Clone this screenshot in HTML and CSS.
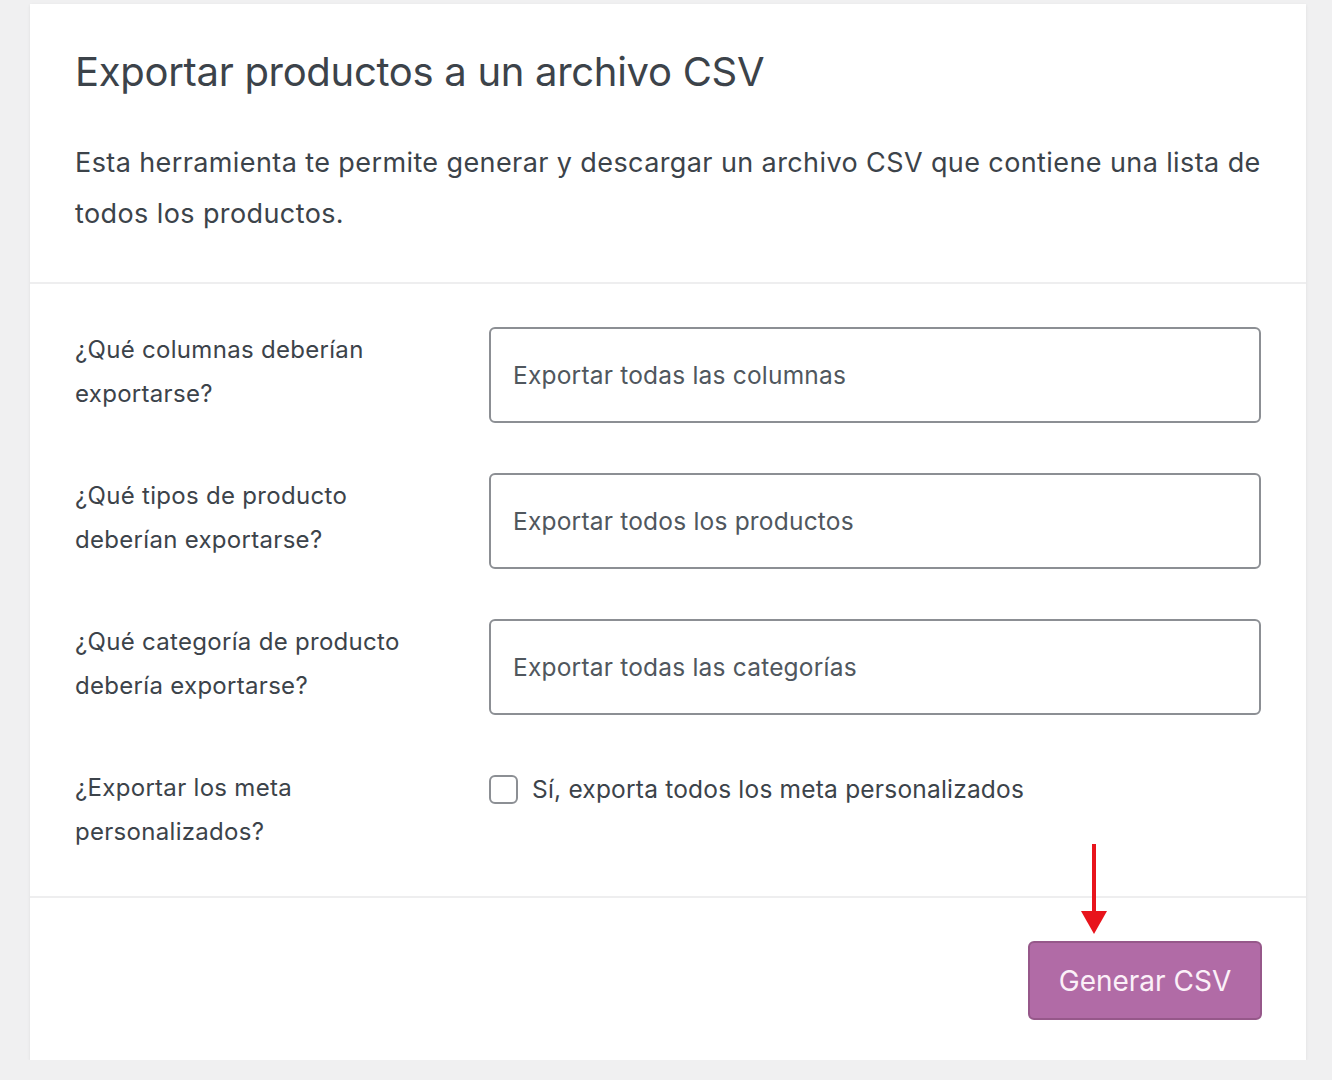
FILE: index.html
```html
<!DOCTYPE html>
<html lang="es">
<head>
    <meta charset="UTF-8">
    <meta name="viewport" content="width=device-width, initial-scale=1.0">
    <title>Exportar productos</title>
    <link rel="stylesheet" href="styles.css">
</head>
<body>

<div class="card">
    <header class="card-head">
        <h2>Exportar productos a un archivo CSV</h2>
        <p>Esta herramienta te permite generar y descargar un archivo CSV que contiene una lista de todos los productos.</p>
    </header>

    <section class="fields">
        <div class="row">
            <label for="cols">¿Qué columnas deberían exportarse?</label>
            <div class="field"><div class="select" id="cols">Exportar todas las columnas</div></div>
        </div>
        <div class="row">
            <label for="types">¿Qué tipos de producto deberían exportarse?</label>
            <div class="field"><div class="select" id="types">Exportar todos los productos</div></div>
        </div>
        <div class="row">
            <label for="cats">¿Qué categoría de producto debería exportarse?</label>
            <div class="field"><div class="select" id="cats">Exportar todas las categorías</div></div>
        </div>
        <div class="row">
            <label for="meta">¿Exportar los meta personalizados?</label>
            <div class="field check">
                <input type="checkbox" id="meta">
                <span>Sí, exporta todos los meta personalizados</span>
            </div>
        </div>
    </section>

    <footer class="card-foot">
        <!-- red pointer above the button -->
        <svg class="arrow" width="28" height="91" viewBox="0 0 28 91">
            <line x1="14" y1="0" x2="14" y2="70" stroke="#e8141c" stroke-width="4"/>
            <polygon points="1,67 27,67 14,90" fill="#e8141c"/>
        </svg>
        <button type="button">Generar CSV</button>
    </footer>
</div>

</body>
</html>
```

FILE: styles.css
```css
body {
    margin: 0;
    background: #f0f0f1;
    font-family: Inter, "Open Sans", Arial, sans-serif;
    color: #3c434a;
}

.card {
    margin: 4px 26px 0 30px;
    background: #fff;
    box-shadow: 0 1px 3px rgba(0, 0, 0, 0.08);
    height: 1056px;
    box-sizing: border-box;
}

.card-head {
    padding: 44px 45px 43px;
    border-bottom: 2px solid #eeeeef;
}

.card-head h2 {
    margin: 0 0 41px;
    font-size: 40px;
    font-weight: 400;
    line-height: 48px;
    color: #3c434a;
    letter-spacing: -0.3px;
}

.card-head p {
    margin: 0;
    font-size: 27px;
    line-height: 51px;
    letter-spacing: 0.4px;
    color: #3c434a;
}

.fields {
    padding: 44px 45px 42px;
    border-bottom: 2px solid #eeeeef;
    display: flex;
    flex-direction: column;
    gap: 51px;
}

.row {
    display: flex;
    align-items: flex-start;
}

.row label {
    width: 414px;
    font-size: 24px;
    line-height: 44px;
    letter-spacing: 0.3px;
    padding-right: 60px;
    box-sizing: border-box;
}

.field {
    flex: 1;
}

.select {
    margin-top: -1px;
    height: 96px;
    border: 2px solid #8c8f94;
    border-radius: 6px;
    box-sizing: border-box;
    padding: 0 22px;
    display: flex;
    align-items: center;
    font-size: 24.5px;
    letter-spacing: 0.2px;
    color: #50575e;
}

.check {
    display: flex;
    align-items: center;
    gap: 14px;
    height: 46px;
    font-size: 24.5px;
    letter-spacing: 0.2px;
}

.check input {
    appearance: none;
    margin: 0;
    width: 29px;
    height: 29px;
    border: 2px solid #8c8f94;
    border-radius: 6px;
    background: #fff;
}

.card-foot {
    padding: 0 44px 40px;
    display: flex;
    flex-direction: column;
    align-items: flex-end;
}

.arrow {
    display: block;
    margin: -54px 154px 0 0;
}

button {
    margin-top: 6px;
    width: 234px;
    height: 79px;
    background: #b16ba6;
    border: 2px solid #96588a;
    border-radius: 6px;
    color: #fbf0f8;
    font-family: inherit;
    font-size: 28px;
    cursor: pointer;
}
```
